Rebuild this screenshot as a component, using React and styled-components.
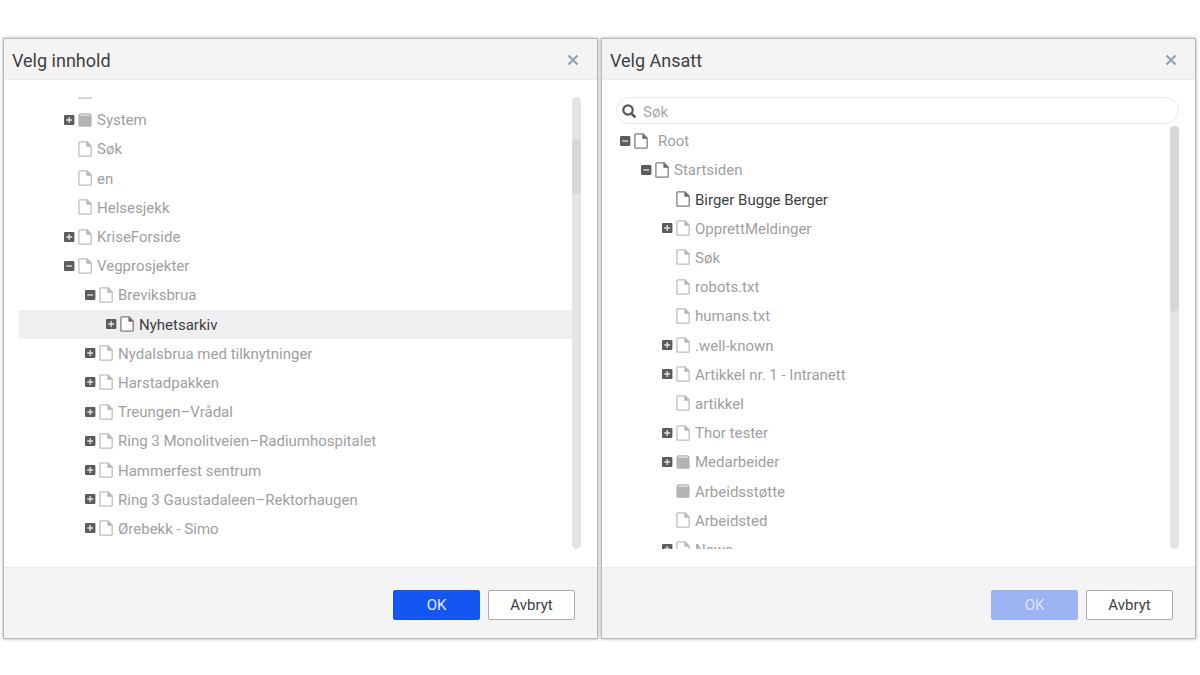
import React from 'react';
import styled, { createGlobalStyle, css } from 'styled-components';

const GlobalStyle = createGlobalStyle`
  *, *::before, *::after { box-sizing: border-box; }
  body {
    margin: 0;
    background: #fff;
    color: #3f3f3f;
    font-family: Roboto, "Liberation Sans", sans-serif;
    font-size: 15px;
  }
  button, input { font: inherit; }
`;

const Page = styled.main`
  display: flex;
  align-items: flex-start;
  gap: 3px;
  padding: 38px 4px 36px 3px;
`;

const Dialog = styled.section`
  flex: 1 1 0;
  min-width: 0;
  border: 1px solid #b9b9b9;
  background: #fff;
  box-shadow: 0 0 3px rgba(0, 0, 0, 0.35);
`;

const Header = styled.header`
  display: flex;
  align-items: center;
  justify-content: space-between;
  height: 41px;
  padding: 2px 18px 0 8px;
  background: #f4f4f4;
  border-bottom: 1px solid #ebebeb;
`;

const Title = styled.h2`
  margin: 0;
  padding-top: 2px;
  font-size: 18px;
  font-weight: 400;
  line-height: 24px;
`;

const CloseButton = styled.button`
  display: flex;
  padding: 0;
  border: 0;
  background: none;
  color: #96a4ad;
  cursor: pointer;
`;

const Body = styled.div`
  display: flex;
  flex-direction: column;
  gap: 2px;
  height: 487px;
  padding: 17px 16px 18px 15px;
`;

const SearchField = styled.label`
  display: flex;
  align-items: center;
  gap: 7px;
  height: 27px;
  margin-left: -1px;
  padding: 0 5px;
  border: 1px solid #e9e9e9;
  border-radius: 14px;
  color: #555;
`;

const SearchInput = styled.input`
  flex: 1;
  min-width: 0;
  padding: 2px 0 0;
  border: 0;
  outline: 0;
  background: none;
  color: #3f3f3f;
  &::placeholder { color: #a6a6a6; opacity: 1; }
`;

const ScrollArea = styled.div`
  display: flex;
  flex: 1;
  min-height: 0;
`;

const Viewport = styled.div`
  flex: 1;
  min-width: 0;
  overflow: hidden;
`;

const Tree = styled.ul`
  display: flex;
  flex-direction: column;
  height: ${(p) => (p.$scrolled ? 467 : 438)}px;
  margin: ${(p) => (p.$scrolled ? '-21px' : '0')} 0 0;
  padding: 0;
  list-style: none;
`;

const Row = styled.li`
  display: flex;
  flex: 1 1 0;
  align-items: center;
  padding-left: ${(p) => p.$level * 21 + 3}px;
  color: #a0a0a0;
  white-space: nowrap;
  ${(p) => p.$selected && css`background: #efeff1;`}
`;

const ToggleSlot = styled.span`
  display: flex;
  flex: none;
  width: 14px;
`;

const ToggleButton = styled.button`
  display: flex;
  padding: 0;
  border: 0;
  background: none;
  cursor: pointer;
`;

const Glyph = styled.span`
  display: flex;
  flex: none;
  color: ${(p) => (p.$dark ? '#686868' : '#b3b3b3')};
`;

const Label = styled.span`
  margin-left: ${(p) => (p.$wide ? 10 : 5)}px;
  padding-top: 1px;
  color: ${(p) => (p.$dark ? '#3f3f3f' : 'inherit')};
`;

const ScrollTrack = styled.div`
  flex: none;
  width: 9px;
  padding-top: ${(p) => p.$offset}px;
  border-radius: 5px;
  background: #e5e5e5;
`;

const ScrollThumb = styled.div`
  height: ${(p) => p.$length}px;
  border-radius: 5px;
  background: #d7d7d7;
`;

const Footer = styled.footer`
  display: flex;
  justify-content: flex-end;
  gap: 8px;
  padding: 22px 22px 18px;
  background: #f4f4f4;
  border-top: 1px solid #ebebeb;
`;

const Button = styled.button`
  width: 87px;
  height: 30px;
  padding: 0;
  border: 1px solid #ababab;
  border-radius: 2px;
  background: #fff;
  color: #3f3f3f;
  cursor: pointer;
  ${(p) => p.$primary && css`
    border-color: #1456f1;
    background: #1456f1;
    color: #e4ebfd;
  `}
  &:disabled {
    border-color: #9cb4f2;
    background: #9cb4f2;
    color: #dce5fb;
    cursor: default;
  }
`;

function ToggleIcon({ open }) {
  return (
    <svg width="11" height="10" viewBox="0 0 11 10" aria-hidden="true">
      <rect width="10.4" height="10" rx="1.2" fill="#5c5c5c" />
      <path d={open ? 'M2.3 5h5.8' : 'M2.3 5h5.8M5.2 2.1v5.8'} stroke="#e4e4e4" strokeWidth="1.3" />
    </svg>
  );
}

function FileIcon() {
  return (
    <svg width="14" height="16" viewBox="0 0 14 16" aria-hidden="true">
      <path d="M1.7.9H9.2L13.2 5V14.3Q13.2 15.2 12.3 15.2H1.7Q.9 15.2 .9 14.3V1.7Q.9.9 1.7.9Z" fill="#fff" stroke="currentColor" strokeWidth="1.3" strokeOpacity="0.85" />
      <path d="M8.4.8L13.5 5.8H8.4Z" fill="currentColor" />
    </svg>
  );
}

function BoxIcon() {
  return (
    <svg width="14" height="16" viewBox="0 0 14 16" aria-hidden="true">
      <path d="M2.8 1.2H11.2Q13.6 1.4 13.6 3.8V13.4Q13.6 14.8 12.2 14.8H1.8Q.4 14.8 .4 13.4V3.8Q.4 1.4 2.8 1.2Z" fill="currentColor" />
      <path d="M3 2.2H11L12.2 3.9H1.8Z" fill="#dcdcdc" />
    </svg>
  );
}

function CloseIcon() {
  return (
    <svg width="12" height="12" viewBox="0 0 12 12" aria-hidden="true">
      <path d="M1.5 1.5l9 9M10.5 1.5l-9 9" stroke="currentColor" strokeWidth="2.4" />
    </svg>
  );
}

function SearchIcon() {
  return (
    <svg width="14" height="14" viewBox="0 0 14 14" aria-hidden="true">
      <circle cx="6" cy="6" r="4.7" fill="none" stroke="currentColor" strokeWidth="2.2" />
      <path d="M9.3 9.3l3.3 3.3" stroke="currentColor" strokeWidth="2.6" strokeLinecap="round" />
    </svg>
  );
}

const contentNodes = [
  { name: '', level: 2 },
  { name: 'System', level: 2, toggle: 'closed', box: true },
  { name: 'Søk', level: 2 },
  { name: 'en', level: 2 },
  { name: 'Helsesjekk', level: 2 },
  { name: 'KriseForside', level: 2, toggle: 'closed' },
  { name: 'Vegprosjekter', level: 2, toggle: 'open' },
  { name: 'Breviksbrua', level: 3, toggle: 'open' },
  { name: 'Nyhetsarkiv', level: 4, toggle: 'closed', selected: true, dark: true, darkIcon: true },
  { name: 'Nydalsbrua med tilknytninger', level: 3, toggle: 'closed' },
  { name: 'Harstadpakken', level: 3, toggle: 'closed' },
  { name: 'Treungen–Vrådal', level: 3, toggle: 'closed' },
  { name: 'Ring 3 Monolitveien–Radiumhospitalet', level: 3, toggle: 'closed' },
  { name: 'Hammerfest sentrum', level: 3, toggle: 'closed' },
  { name: 'Ring 3 Gaustadaleen–Rektorhaugen', level: 3, toggle: 'closed' },
  { name: 'Ørebekk - Simo', level: 3, toggle: 'closed' },
];

const employeeNodes = [
  { name: 'Root', level: 0, toggle: 'open', darkIcon: true, wide: true },
  { name: 'Startsiden', level: 1, toggle: 'open', darkIcon: true },
  { name: 'Birger Bugge Berger', level: 2, dark: true, darkIcon: true },
  { name: 'OpprettMeldinger', level: 2, toggle: 'closed' },
  { name: 'Søk', level: 2 },
  { name: 'robots.txt', level: 2 },
  { name: 'humans.txt', level: 2 },
  { name: '.well-known', level: 2, toggle: 'closed' },
  { name: 'Artikkel nr. 1 - Intranett', level: 2, toggle: 'closed' },
  { name: 'artikkel', level: 2 },
  { name: 'Thor tester', level: 2, toggle: 'closed' },
  { name: 'Medarbeider', level: 2, toggle: 'closed', box: true },
  { name: 'Arbeidsstøtte', level: 2, box: true },
  { name: 'Arbeidsted', level: 2 },
  { name: 'News', level: 2, toggle: 'closed' },
];

function Picker({ id, title, nodes, search, scrolled, thumbOffset, thumbLength, okDisabled }) {
  return (
    <Dialog role="dialog" aria-labelledby={id}>
      <Header>
        <Title id={id}>{title}</Title>
        <CloseButton type="button" aria-label="Lukk"><CloseIcon /></CloseButton>
      </Header>
      <Body>
        {search && (
          <SearchField>
            <SearchIcon />
            <SearchInput type="text" placeholder="Søk" aria-label="Søk" />
          </SearchField>
        )}
        <ScrollArea>
          <Viewport>
            <Tree $scrolled={scrolled}>
              {nodes.map((node, i) => (
                <Row key={i} $level={node.level} $selected={node.selected}>
                  <ToggleSlot>
                    {node.toggle && (
                      <ToggleButton
                        type="button"
                        aria-label={node.name}
                        aria-expanded={node.toggle === 'open'}
                      >
                        <ToggleIcon open={node.toggle === 'open'} />
                      </ToggleButton>
                    )}
                  </ToggleSlot>
                  <Glyph $dark={node.darkIcon}>{node.box ? <BoxIcon /> : <FileIcon />}</Glyph>
                  <Label $dark={node.dark} $wide={node.wide}>{node.name}</Label>
                </Row>
              ))}
            </Tree>
          </Viewport>
          <ScrollTrack $offset={thumbOffset}>
            <ScrollThumb $length={thumbLength} />
          </ScrollTrack>
        </ScrollArea>
      </Body>
      <Footer>
        <Button type="button" $primary disabled={okDisabled}>OK</Button>
        <Button type="button">Avbryt</Button>
      </Footer>
    </Dialog>
  );
}

export default function App() {
  return (
    <>
      <GlobalStyle />
      <Page>
        <Picker id="content-title" title="Velg innhold" nodes={contentNodes} scrolled thumbOffset={42} thumbLength={55} />
        <Picker id="employee-title" title="Velg Ansatt" nodes={employeeNodes} search thumbOffset={0} thumbLength={186} okDisabled />
      </Page>
    </>
  );
}
